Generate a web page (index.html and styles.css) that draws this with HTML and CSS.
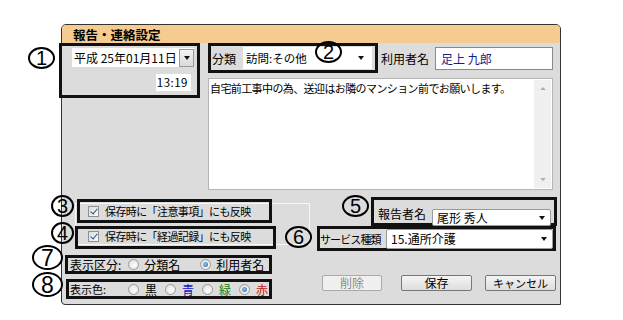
FILE: index.html
```html
<!DOCTYPE html>
<html lang="ja">
<head>
  <meta charset="UTF-8" />
  <title>報告・連絡設定</title>
  <link rel="stylesheet" href="styles.css">
</head>
<body>
  <div class="dialog">
    <div class="title">報告・連絡設定</div>

    <div class="top">
      <div class="left-col">
        <div class="box box1">
          <div class="date">
            <span class="date-text">平成 25年01月11日</span>
            <span class="drop"><i class="arrow"></i></span>
          </div>
          <div class="time">13:19</div>
        </div>
      </div>

      <div class="right-col">
        <div class="row2">
          <div class="box box2">
            <span class="lbl-kind">分類</span>
            <div class="combo kind"><span>訪問:その他</span><i class="arrow"></i></div>
          </div>
          <span class="lbl-user">利用者名</span>
          <div class="input user">足上 九郎</div>
        </div>
        <div class="memo">
          <div class="memo-text">自宅前工事中の為、送迎はお隣のマンション前でお願いします。</div>
          <div class="scroll"><span class="up"></span><span class="down"></span></div>
        </div>
      </div>
    </div>

    <div class="bottom">
      <div class="bottom-left">
        <div class="group">
          <div class="box box3"><span class="check"></span>保存時に「注意事項」にも反映</div>
          <div class="box box4"><span class="check"></span>保存時に「経過記録」にも反映</div>
        </div>
        <div class="box box7">
          <span class="opt-lbl">表示区分:</span>
          <span class="radio r-kind"></span><span class="opt">分類名</span>
          <span class="radio on r-user"></span><span class="opt">利用者名</span>
        </div>
        <div class="box box8">
          <span class="opt-lbl">表示色:</span>
          <span class="radio r-c1"></span><span class="col black">黒</span>
          <span class="radio r-c"></span><span class="col blue">青</span>
          <span class="radio r-c"></span><span class="col green">緑</span>
          <span class="radio on r-c"></span><span class="col red">赤</span>
        </div>
      </div>

      <div class="bottom-right">
        <div class="box box5">
          <span class="lbl-rep">報告者名</span>
          <div class="combo rep"><span>尾形 秀人</span><i class="arrow"></i></div>
        </div>
        <div class="box box6">
          <span class="lbl-svc">サービス種類</span>
          <div class="combo svc"><span>15.通所介護</span><i class="arrow"></i></div>
        </div>
        <div class="buttons">
          <button class="btn del" disabled>削除</button>
          <button class="btn save">保存</button>
          <button class="btn cancel">キャンセル</button>
        </div>
      </div>
    </div>
  </div>

  <span class="num n1">1</span>
  <span class="num n2">2</span>
  <span class="num small n3">3</span>
  <span class="num small n4">4</span>
  <span class="num n5">5</span>
  <span class="num n6">6</span>
  <span class="num big n7">7</span>
  <span class="num big n8">8</span>
</body>
</html>
```

FILE: styles.css
```css
body {
  margin: 0;
  padding: 24px 0 0 61px;
  width: 623px;
  height: 320px;
  box-sizing: border-box;
  overflow: hidden;
  position: relative;
  background: #fff;
  font-family: "Noto Sans CJK JP", sans-serif;
  font-size: 12px;
  color: #000;
}
.dialog {
  width: 500px;
  height: 281px;
  box-sizing: border-box;
  border: 1px solid #333;
  border-radius: 5px 5px 0 4px;
  background: #dcdcdc;
}
.title {
  height: 18px;
  padding-left: 11px;
  background: #f6cb90;
  border-radius: 4px 4px 0 0;
  font-weight: bold;
  font-size: 12.5px;
  line-height: 19px;
}
.box {
  border: 3px solid #111;
  box-sizing: border-box;
}

/* top area */
.top {
  display: flex;
  height: 147px;
}
.left-col {
  width: 146px;
}
.box1 {
  margin-left: -3px;
  width: 141px;
  height: 55px;
}
.date {
  margin: 2px 0 0 10px;
  width: 122px;
  height: 19px;
  background: #fff;
  display: flex;
  align-items: center;
  justify-content: space-between;
  padding-left: 2px;
  box-sizing: border-box;
  font-size: 12px;
}
.date-text {
  white-space: nowrap;
}
.drop {
  width: 15px;
  height: 18px;
  flex-shrink: 0;
  box-sizing: border-box;
  border: 1px solid #9a9a9a;
  background: linear-gradient(#f4f4f4, #dadada);
  display: flex;
  align-items: center;
  justify-content: center;
}
.arrow {
  width: 0;
  height: 0;
  border-left: 3.5px solid transparent;
  border-right: 3.5px solid transparent;
  border-top: 4px solid #111;
}
.time {
  margin: 7px 0 0 94px;
  width: 35px;
  height: 17px;
  background: #fff;
  text-align: right;
  padding-right: 3px;
  box-sizing: border-box;
  line-height: 17px;
  font-size: 11.5px;
  letter-spacing: 0.5px;
}
.right-col {
  width: 345px;
  display: flex;
  flex-direction: column;
}
.row2 {
  display: flex;
  align-items: center;
  height: 30px;
}
.box2 {
  width: 170px;
  height: 30px;
  display: flex;
  align-items: center;
}
.lbl-kind {
  width: 31px;
  padding-left: 1px;
}
.combo {
  background: #fff;
  display: flex;
  align-items: center;
  justify-content: space-between;
  box-sizing: border-box;
  flex-shrink: 0;
}
.combo.kind {
  width: 129px;
  height: 22px;
  padding: 0 8px 0 3px;
  font-size: 11.5px;
}
.lbl-user {
  margin-left: 3px;
}
.input.user {
  margin-left: 6px;
  width: 118px;
  height: 23px;
  box-sizing: border-box;
  border: 1px solid #8a8a8a;
  background: #fff;
  color: #1a1a8c;
  padding-left: 5px;
  line-height: 21px;
}
.memo {
  margin-top: 5px;
  height: 112px;
  display: flex;
  background: #fff;
  border: 1px solid #b5b5b5;
  box-sizing: border-box;
}
.memo-text {
  flex: 1;
  padding: 1px 1px;
  font-size: 11px;
  letter-spacing: -0.6px;
}
.scroll {
  width: 17px;
  margin: 1px 1px 1px 0;
  background: #f0f0f0;
  display: flex;
  flex-direction: column;
  justify-content: space-between;
  align-items: center;
  padding: 7px 0 7px;
}
.scroll .up, .scroll .down {
  width: 0;
  height: 0;
  border-left: 3px solid transparent;
  border-right: 3px solid transparent;
}
.scroll .up {
  border-bottom: 3px solid #b0b0b0;
}
.scroll .down {
  border-top: 3px solid #b0b0b0;
}

/* bottom area */
.bottom {
  display: flex;
  height: 113px;
}
.bottom-left {
  width: 253px;
}
.group {
  margin: 13px 0 0 13px;
  width: 235px;
  height: 42px;
  box-sizing: border-box;
  border: 1px solid #f7f7f7;
}
.box3, .box4 {
  display: flex;
  align-items: center;
  font-size: 11px;
  letter-spacing: -0.6px;
}
.box3 {
  margin: -5px 0 0 1px;
  width: 195px;
  height: 24px;
  padding-left: 8px;
}
.box4 {
  margin: 3px 0 0 -1px;
  width: 201px;
  height: 23px;
  padding-left: 10px;
  padding-bottom: 3px;
}
.check {
  width: 11px;
  height: 11px;
  box-sizing: border-box;
  border: 1px solid #8e8f8f;
  background: linear-gradient(135deg, #dcdcdc, #fbfbfb);
  margin-right: 6px;
  position: relative;
}
.check::after {
  content: "";
  position: absolute;
  left: 3px;
  top: 0px;
  width: 3px;
  height: 6px;
  border-right: 1.5px solid #2b4e8c;
  border-bottom: 1.5px solid #2b4e8c;
  transform: rotate(40deg);
}
.box7 {
  margin: 10px 0 0 3px;
  width: 207px;
  height: 19px;
  display: flex;
  align-items: center;
  padding-left: 2px;
}
.box8 {
  margin: 5px 0 0 4px;
  width: 206px;
  height: 20px;
  display: flex;
  align-items: center;
  padding-left: 1px;
}
.radio {
  width: 11px;
  height: 11px;
  box-sizing: border-box;
  border-radius: 50%;
  border: 1px solid #9a9a9a;
  background: radial-gradient(circle at 60% 60%, #fff, #d8d8d8);
  position: relative;
  flex-shrink: 0;
}
.radio.on::after {
  content: "";
  position: absolute;
  left: 2px;
  top: 2px;
  width: 5px;
  height: 5px;
  border-radius: 50%;
  background: radial-gradient(circle at 40% 40%, #9cc8ee, #1e5f9e);
}
.r-kind { margin: 0 5px 0 7px; }
.r-user { margin: 0 5px 0 20px; }
.r-c1 { margin: 0 6px 0 22px; }
.r-c { margin: 0 6px 0 8px; }
.box8 .opt-lbl {
  font-size: 11px;
}
.col.black { color: #000; }
.col.blue { color: #1010c8; }
.col.green { color: #108010; }
.col.red { color: #c81010; }

.bottom-right {
  width: 245px;
}
.box5 {
  margin: 7px 0 0 56px;
  width: 186px;
  height: 29px;
  display: flex;
  align-items: flex-end;
  padding-left: 4px;
}
.lbl-rep {
  margin-bottom: 1px;
  white-space: nowrap;
}
.combo.rep {
  margin: 0 0 -3px 6px;
  width: 119px;
  height: 17px;
  border: 1px solid #9a9a9a;
  border-radius: 2px;
  padding: 0 5px 0 4px;
}
.box6 {
  margin-left: 2px;
  width: 239px;
  height: 25px;
  display: flex;
  align-items: center;
}
.lbl-svc {
  width: 64px;
  flex-shrink: 0;
  white-space: nowrap;
  font-size: 11px;
  letter-spacing: -0.9px;
}
.combo.svc {
  margin-left: 2px;
  width: 167px;
  height: 20px;
  border: 1px solid #9a9a9a;
  border-radius: 2px;
  padding: 0 5px 0 4px;
}
.buttons {
  margin: 24px 0 0 7px;
  display: flex;
}
.btn {
  height: 16px;
  padding: 0;
  font-family: inherit;
  font-size: 12px;
  line-height: 14px;
  border: 1px solid #777;
  border-radius: 2px;
  background: linear-gradient(#f4f4f4, #dedede);
  color: #000;
}
.btn.del {
  width: 60px;
  color: #8a8a8a;
  border-color: #aaa;
  background: #f0f0f0;
}
.btn.save {
  width: 71px;
  margin-left: 19px;
}
.btn.cancel {
  width: 71px;
  margin-left: 13px;
  font-size: 11px;
}

/* annotation numbers */
.num {
  position: absolute;
  width: 27px;
  height: 22px;
  box-sizing: border-box;
  border: 2px solid #000;
  border-radius: 50%;
  font-family: "Liberation Sans", sans-serif;
  font-size: 20px;
  line-height: 19px;
  text-align: center;
}
.num.small {
  width: 23px;
  height: 22px;
}
.num.big {
  width: 31px;
  height: 25px;
  font-size: 23px;
  line-height: 22px;
}
.n1 { left: 28px; top: 47px; }
.n2 { left: 315px; top: 41px; }
.n3 { left: 51px; top: 195px; }
.n4 { left: 51px; top: 222px; }
.n5 { left: 342px; top: 195px; }
.n6 { left: 285px; top: 226px; }
.n7 { left: 32px; top: 245px; }
.n8 { left: 32px; top: 272px; }
```
